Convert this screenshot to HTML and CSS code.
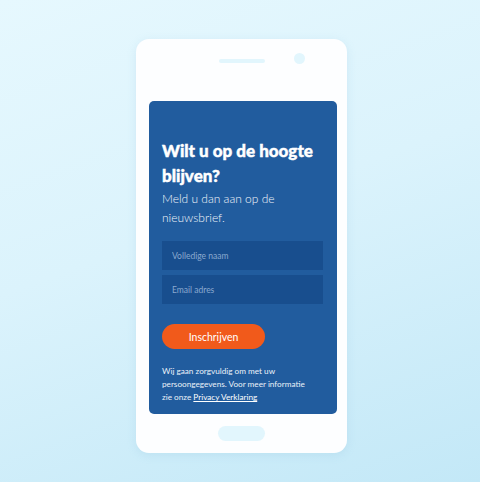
FILE: index.html
```html
<!DOCTYPE html>
<html lang="nl">
<head>
<meta charset="utf-8">
<link rel="stylesheet" href="styles.css">
</head>
<body>
<div class="stage">
  <div class="phone">
    <div class="phone-top">
      <span class="speaker"></span>
      <span class="camera"></span>
    </div>
    <div class="card">
      <h1 class="title">Wilt u op de hoogte blijven?</h1>
      <p class="lead">Meld u dan aan op de nieuwsbrief.</p>
      <form class="form">
        <input class="field" type="text" placeholder="Volledige naam">
        <input class="field" type="email" placeholder="Email adres">
        <button class="btn" type="button">Inschrijven</button>
      </form>
      <p class="note">Wij gaan zorgvuldig om met uw persoongegevens. Voor meer informatie zie onze <a href="#">Privacy Verklaring</a></p>
    </div>
    <div class="phone-bottom">
      <span class="home"></span>
    </div>
  </div>
</div>
</body>
</html>
```

FILE: styles.css
```css
* { box-sizing: border-box; }
html, body { margin: 0; padding: 0; }
body {
  width: 480px;
  height: 482px;
  overflow: hidden;
  background: linear-gradient(160deg, #e6f8fe 0%, #dbf3fc 45%, #c3e8f7 100%);
  font-family: "Lato", "Open Sans", sans-serif;
}
.stage {
  padding: 39px 0 0 136px;
}
.phone {
  width: 211px;
  height: 414px;
  background: #fdfeff;
  border-radius: 13px;
  box-shadow: 0 2px 10px rgba(120, 180, 210, 0.18);
  padding: 0 10px 0 13px;
  display: flex;
  flex-direction: column;
}
.phone-top {
  height: 62px;
  position: relative;
}
.speaker {
  position: absolute;
  left: 70px;
  top: 20px;
  width: 46px;
  height: 4px;
  border-radius: 2px;
  background: #e2f6fd;
}
.camera {
  position: absolute;
  left: 145px;
  top: 14px;
  width: 11px;
  height: 11px;
  border-radius: 50%;
  background: #e2f6fd;
}
.card {
  background: #215c9e;
  border-radius: 5px;
  height: 313px;
  padding: 37px 13px 0 13px;
  color: #fff;
}
.title {
  margin: 0;
  font-size: 17px;
  line-height: 25px;
  font-weight: 900;
  letter-spacing: 0;
  -webkit-text-stroke: 0.45px #fff;
}
.lead {
  margin: 1px 0 0 0;
  font-size: 12px;
  line-height: 19px;
  font-weight: 300;
  color: #f2f6fb;
}
.form {
  margin-top: 14px;
  display: flex;
  flex-direction: column;
  gap: 5px;
}
.field {
  width: 161px;
  height: 29px;
  border: 0;
  outline: 0;
  background: #184e8e;
  padding: 0 10px;
  font-family: inherit;
  font-size: 8.5px;
  color: #fff;
}
.field::placeholder { color: #8aa9cf; }
.btn {
  margin-top: 15px;
  width: 103px;
  height: 25px;
  border: 0;
  border-radius: 13px;
  background: #f15a1b;
  color: #fff;
  font-family: inherit;
  font-size: 10.5px;
  cursor: pointer;
}
.note {
  margin: 16px 0 0 0;
  font-size: 8.2px;
  line-height: 13px;
  color: #eaf1f9;
  padding-right: 14px;
}
.note a { color: #fff; text-decoration: underline; }
.phone-bottom {
  flex: 1;
  display: flex;
  align-items: center;
  justify-content: center;
}
.home {
  width: 47px;
  height: 15px;
  border-radius: 8px;
  background: #e2f6fd;
  margin-left: -3px;
}
```
